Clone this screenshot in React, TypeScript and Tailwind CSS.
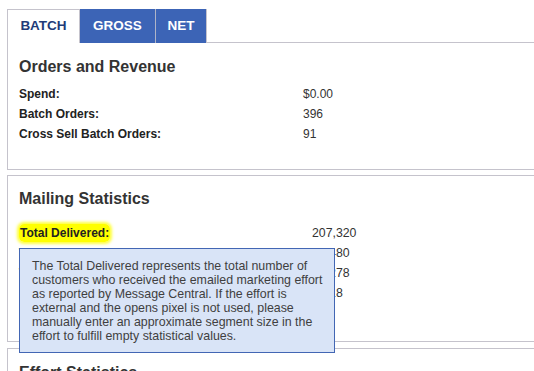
import React from 'react';

const orders = [
  { label: 'Spend:', value: '$0.00' },
  { label: 'Batch Orders:', value: '396' },
  { label: 'Cross Sell Batch Orders:', value: '91' },
];

const mailing = [
  { label: 'Total Delivered:', value: '207,320', hot: true },
  { label: 'Total Opens:', value: '12,480' },
  { label: 'Total Clicks:', value: '10,278' },
  { label: 'Unsubscribes:', value: '3,418' },
];

export default function App() {
  return (
    <div className="w-[534px] h-[371px] overflow-hidden bg-white pl-[7px] pt-[9px] text-[#333] font-['Liberation_Sans',Arial,sans-serif]">
      {/* tabs */}
      <div className="flex h-[34px]">
        <div className="flex w-[73px] items-center justify-center bg-white border-l border-t border-r border-[#c5c3cc] text-[13.5px] font-bold text-[#223b78]">BATCH</div>
        <div className="flex w-[76px] items-center justify-center bg-[#3c64b6] border-r border-[#aeb4c8] text-[13.5px] font-bold text-white">GROSS</div>
        <div className="flex w-[51px] items-center justify-center bg-[#3c64b6] border-r border-[#c5c3cc] text-[13.5px] font-bold text-white">NET</div>
        <div className="flex-1 border-b border-[#c5c3cc]" />
      </div>

      {/* orders and revenue */}
      <div className="border-l border-b border-[#c5c3cc] pl-[11px] pt-[14px] pb-[25px]">
        <h2 className="text-[16px] leading-[20px] font-bold text-[#333]">Orders and Revenue</h2>
        <div className="mt-[7px]">
          {orders.map(r => (
            <div key={r.label} className="flex text-[12px] leading-[20px]">
              <span className="w-[284px] font-bold text-[#222]">{r.label}</span>
              <span>{r.value}</span>
            </div>
          ))}
        </div>
      </div>

      {/* mailing statistics */}
      <div className="relative mt-[5px] border-l border-t border-b border-[#c5c3cc] pl-[11px] pt-[13px] pb-[38px]">
        <h2 className="text-[16px] leading-[20px] font-bold text-[#333]">Mailing Statistics</h2>
        <div className="mt-[14px]">
          {mailing.map(r => (
            <div key={r.label} className="flex text-[12px] leading-[20px]">
              <span className="w-[293px] font-bold text-[#222]">
                {r.hot ? (
                  <span className="bg-[#ffff00] rounded-[5px] px-[1px] py-[2px] shadow-[0_0_3px_2px_#ffff40]">{r.label}</span>
                ) : r.label}
              </span>
              <span className="text-[12.3px]">{r.value}</span>
            </div>
          ))}
        </div>

        {/* tooltip */}
        <div className="absolute left-[11px] top-[72px] w-[316px] h-[105px] bg-[#d9e4f7] border border-[#4266b4] pl-[12px] pt-[10px] text-[12.4px] leading-[14px] text-[#3f3f3f]">
          The Total Delivered represents the total number of<br />
          customers who received the emailed marketing effort<br />
          as reported by Message Central. If the effort is<br />
          external and the opens pixel is not used, please<br />
          manually enter an approximate segment size in the<br />
          effort to fulfill empty statistical values.
        </div>
      </div>

      {/* effort statistics */}
      <div className="mt-[6px] border-l border-t border-[#c5c3cc] pl-[11px] pt-[14px]">
        <h2 className="text-[16px] leading-[20px] font-bold text-[#333]">Effort Statistics</h2>
      </div>
    </div>
  );
}
